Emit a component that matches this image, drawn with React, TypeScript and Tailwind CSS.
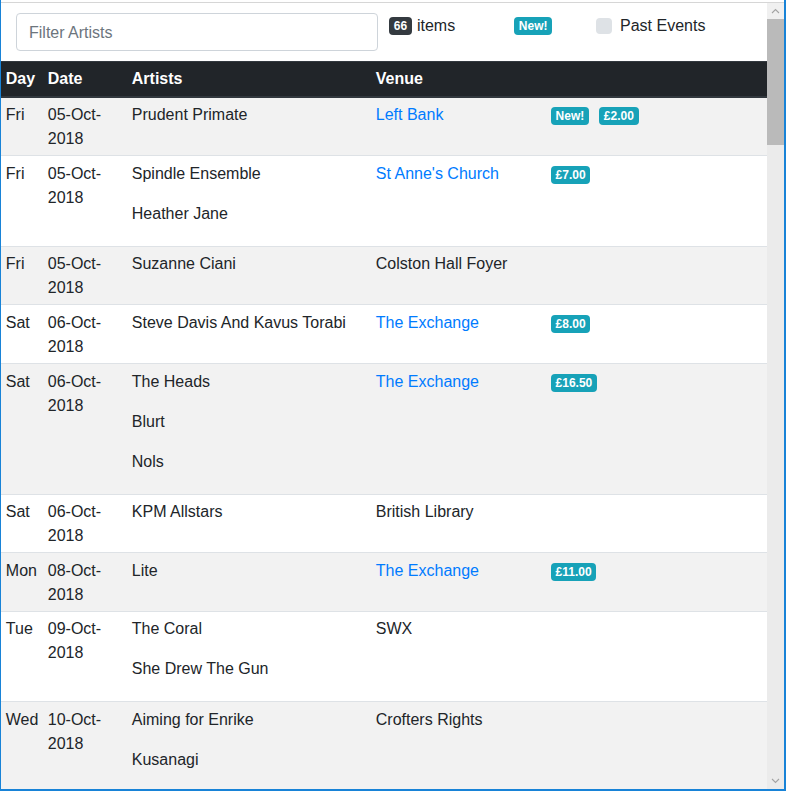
import React from 'react';

type Gig = {
  day: string;
  date: string;
  artists: string[];
  venue: string;
  link: boolean;
  isNew?: boolean;
  price?: string;
};

const gigs: Gig[] = [
  { day: 'Fri', date: '05-Oct-2018', artists: ['Prudent Primate'], venue: 'Left Bank', link: true, isNew: true, price: '£2.00' },
  { day: 'Fri', date: '05-Oct-2018', artists: ['Spindle Ensemble', 'Heather Jane'], venue: "St Anne's Church", link: true, price: '£7.00' },
  { day: 'Fri', date: '05-Oct-2018', artists: ['Suzanne Ciani'], venue: 'Colston Hall Foyer', link: false },
  { day: 'Sat', date: '06-Oct-2018', artists: ['Steve Davis And Kavus Torabi'], venue: 'The Exchange', link: true, price: '£8.00' },
  { day: 'Sat', date: '06-Oct-2018', artists: ['The Heads', 'Blurt', 'Nols'], venue: 'The Exchange', link: true, price: '£16.50' },
  { day: 'Sat', date: '06-Oct-2018', artists: ['KPM Allstars'], venue: 'British Library', link: false },
  { day: 'Mon', date: '08-Oct-2018', artists: ['Lite'], venue: 'The Exchange', link: true, price: '£11.00' },
  { day: 'Tue', date: '09-Oct-2018', artists: ['The Coral', 'She Drew The Gun'], venue: 'SWX', link: false },
  { day: 'Wed', date: '10-Oct-2018', artists: ['Aiming for Enrike', 'Kusanagi'], venue: 'Crofters Rights', link: false },
];

const Badge = ({ children, dark }: { children: React.ReactNode; dark?: boolean }) => (
  <span
    className={`inline-block px-[4.8px] py-[3px] text-[12px] font-bold leading-none rounded-[4px] text-white align-baseline ${
      dark ? 'bg-[#343a40]' : 'bg-[#17a2b8]'
    }`}
  >
    {children}
  </span>
);

const Chevron = ({ up }: { up?: boolean }) => (
  <svg width="9" height="6" viewBox="0 0 9 6">
    <polyline
      points={up ? '1,5 4.5,1.5 8,5' : '1,1 4.5,4.5 8,1'}
      fill="none"
      stroke="#a3a3a3"
      strokeWidth="1.1"
    />
  </svg>
);

const cell = 'px-[4.8px] pt-[5.6px] pb-[4px] border-t border-[#dee2e6] align-top';

const App = () => {
  return (
    <div
      className="w-[786px] h-[791px] bg-white border-l border-r-2 border-b-2 border-[#1883d7] pt-[2px] flex flex-col text-[#212529] overflow-hidden"
      style={{ fontFamily: '"Liberation Sans", Arial, sans-serif' }}
    >
      <div className="flex flex-1 min-h-0 border-t border-[#d6d6d6]">
        <div className="w-[766px] overflow-hidden">
          <div className="flex items-start pl-[15px] pt-[10px] pb-[10px]">
            <input
              className="w-[362px] h-[38px] border border-[#ced4da] rounded-[4px] px-[12px] pt-[2px] text-[16px] placeholder:text-[#6c757d] outline-none"
              placeholder="Filter Artists"
            />
            <div className="w-[125px] ml-[11px] mt-[1px] flex items-center h-6 text-[16px]">
              <Badge dark>66</Badge>
              <span className="ml-[5px]">items</span>
            </div>
            <div className="w-[82px] mt-[1px] flex items-center h-6">
              <Badge>New!</Badge>
            </div>
            <label className="flex items-center mt-[1px] h-6 text-[16px]">
              <span className="w-4 h-4 rounded-[4px] bg-[#dee2e6] mr-[8px]" />
              Past Events
            </label>
          </div>

          <table className="w-[766px] table-fixed border-collapse text-[16px] leading-6">
            <colgroup>
              <col className="w-[42px]" />
              <col className="w-[84px]" />
              <col className="w-[244px]" />
              <col className="w-[175px]" />
              <col />
            </colgroup>
            <thead>
              <tr className="bg-[#212529] text-white text-left">
                {['Day', 'Date', 'Artists', 'Venue', ''].map((h, i) => (
                  <th
                    key={i}
                    className="px-[4.8px] py-[4.8px] font-bold border-t border-b-2 border-[#32383e] align-bottom"
                  >
                    {h}
                  </th>
                ))}
              </tr>
            </thead>
            <tbody>
              {gigs.map((g, i) => (
                <tr key={i} className={i % 2 === 0 ? 'bg-[#f2f2f2]' : 'bg-white'}>
                  <td className={cell}>{g.day}</td>
                  <td className={cell}>{g.date}</td>
                  <td className={cell}>
                    {g.artists.map((a) => (
                      <p key={a} className="mb-4">
                        {a}
                      </p>
                    ))}
                  </td>
                  <td className={cell}>
                    {g.link ? <a className="text-[#007bff]">{g.venue}</a> : g.venue}
                  </td>
                  <td className={cell}>
                    {g.isNew && <span className="mr-[10px]"><Badge>New!</Badge></span>}
                    {g.price && <Badge>{g.price}</Badge>}
                  </td>
                </tr>
              ))}
            </tbody>
          </table>
        </div>

        <div className="w-[17px] flex flex-col bg-[#ebebeb]">
          <div className="h-[16px] flex items-center justify-center bg-[#f0f0f0]">
            <Chevron up />
          </div>
          <div className="h-[126px] bg-[#bababa]" />
          <div className="flex-1" />
          <div className="h-[17px] flex items-center justify-center">
            <Chevron />
          </div>
        </div>
      </div>
    </div>
  );
};

export default App;
